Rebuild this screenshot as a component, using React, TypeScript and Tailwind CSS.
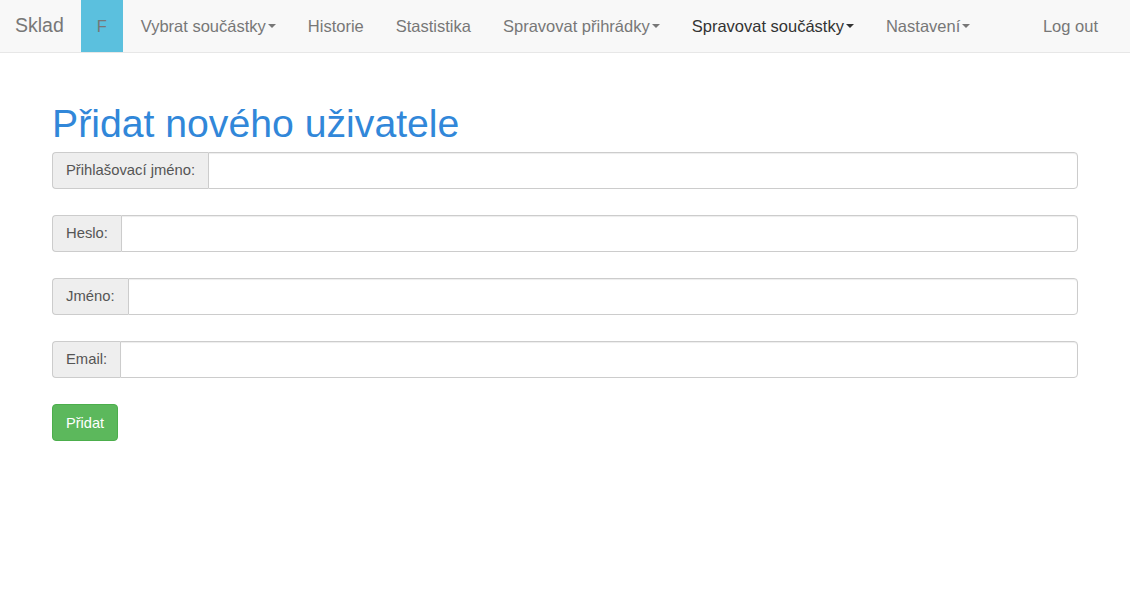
import { useState } from "react";

const font = { fontFamily: '"Liberation Sans", Arial, sans-serif' };

function Caret({ dark }: { dark?: boolean }) {
  return (
    <span
      className={`ml-[2px] inline-block h-0 w-0 border-x-[4px] border-t-[4px] border-x-transparent align-middle ${
        dark ? "border-t-[#333]" : "border-t-[#777]"
      }`}
    />
  );
}

function NavLink({ label, caret, active }: { label: string; caret?: boolean; active?: boolean }) {
  return (
    <a
      href="#"
      className={`flex h-full items-center px-[16px] text-[16.5px] ${active ? "text-[#333]" : "text-[#777]"}`}
    >
      {label}
      {caret && <Caret dark={active} />}
    </a>
  );
}

function Field({ label, type = "text" }: { label: string; type?: string }) {
  const [value, setValue] = useState("");
  return (
    <div className="flex h-[37px] w-full">
      <span className="flex items-center whitespace-nowrap rounded-l-[4px] border border-r-0 border-[#ccc] bg-[#eee] px-[13px] text-[14.8px] text-[#555]">
        {label}
      </span>
      <input
        type={type}
        value={value}
        onChange={(e) => setValue(e.target.value)}
        className="h-full flex-1 rounded-r-[4px] border border-[#ccc] bg-white px-3 text-[14px] text-[#555] shadow-[inset_0_1px_1px_rgba(0,0,0,0.075)] outline-none"
      />
    </div>
  );
}

export default function App() {
  return (
    <div className="min-h-screen bg-white" style={font}>
      {/* Navbar */}
      <nav className="flex h-[53px] items-stretch border-b border-[#e7e7e7] bg-[#f8f8f8] pr-[16px]">
        <a href="#" className="flex items-center pl-[15px] pr-[17px] text-[19.5px] text-[#777]">
          Sklad
        </a>
        <a href="#" className="mr-[2px] flex w-[42px] items-center justify-center bg-[#5bc0de] text-[16.5px] text-[#777]">
          F
        </a>
        <NavLink label="Vybrat součástky" caret />
        <NavLink label="Historie" />
        <NavLink label="Stastistika" />
        <NavLink label="Spravovat přihrádky" caret />
        <NavLink label="Spravovat součástky" caret active />
        <NavLink label="Nastavení" caret />
        <div className="ml-auto flex">
          <NavLink label="Log out" />
        </div>
      </nav>

      {/* Content */}
      <main className="px-[52px]">
        <h1 className="mt-[49px] mb-[7px] text-[39.2px] leading-[43px] text-[#3187d9]">Přidat nového uživatele</h1>
        <form className="flex flex-col gap-[26px]" onSubmit={(e) => e.preventDefault()}>
          <Field label="Přihlašovací jméno:" />
          <Field label="Heslo:" type="password" />
          <Field label="Jméno:" />
          <Field label="Email:" type="email" />
          <div>
            <button
              type="submit"
              className="h-[37px] rounded-[4px] border border-[#4cae4c] bg-[#5cb85c] px-[13px] pt-[2px] text-[14.6px] text-white"
            >
              Přidat
            </button>
          </div>
        </form>
      </main>
    </div>
  );
}
